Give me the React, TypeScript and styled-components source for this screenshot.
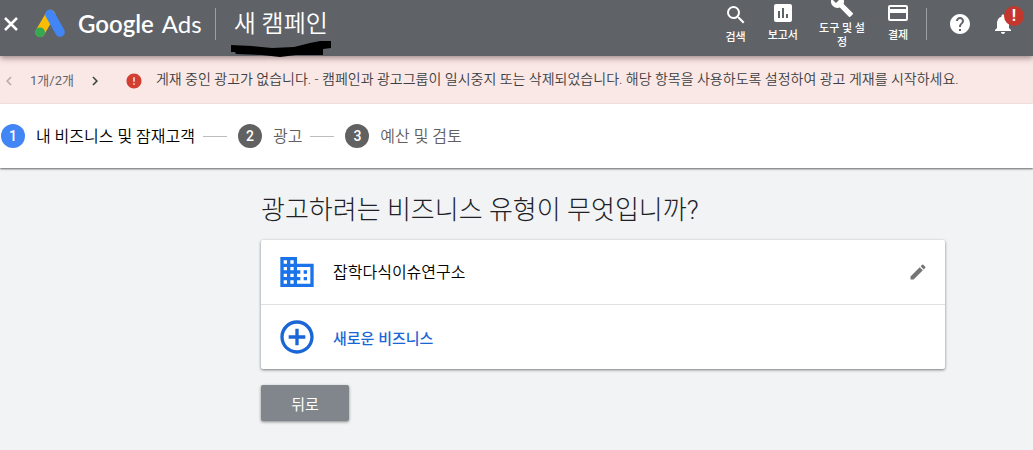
import React from "react";
import styled, { createGlobalStyle } from "styled-components";
import {
  MdAddCircleOutline,
  MdAssessment,
  MdBuild,
  MdBusiness,
  MdChevronLeft,
  MdChevronRight,
  MdEdit,
  MdError,
  MdHelp,
  MdNotifications,
  MdOutlineCreditCard,
  MdSearch,
} from "react-icons/md";

const GlobalStyle = createGlobalStyle`
  *, *::before, *::after { box-sizing: border-box; }
  body {
    margin: 0;
    background: #f1f3f4;
    color: #202124;
    font-family: Roboto, "Noto Sans CJK KR", sans-serif;
    font-size: 14px;
  }
  button {
    margin: 0;
    padding: 0;
    border: 0;
    background: none;
    color: inherit;
    font: inherit;
    cursor: pointer;
  }
  svg { display: block; flex: none; }
`;

const Header = styled.header`
  position: relative;
  z-index: 1;
  display: flex;
  align-items: center;
  height: 56px;
  padding: 0 18px 8px 0;
  background: #5f6368;
  color: #fff;
  box-shadow: 0 2px 6px rgba(60, 30, 40, 0.5);
`;

const IconButton = styled.button`
  position: relative;
  display: flex;
  flex: none;
`;

const Brand = styled.a`
  display: flex;
  align-items: center;
  gap: 12px;
  margin: 0 13px 0 12px;
  color: #fff;
  text-decoration: none;
`;

const Wordmark = styled.span`
  display: flex;
  gap: 8px;
  font-family: Lato, sans-serif;
  font-size: 24px;
  line-height: 32px;
  white-space: nowrap;

  strong { font-weight: 600; }
`;

const HeaderDivider = styled.span`
  flex: none;
  width: 1px;
  height: 32px;
  background: #9aa0a6;
`;

const PageTitle = styled.h1`
  position: relative;
  margin: 0 auto 0 18px;
  font-size: 24px;
  font-weight: 350;
  line-height: 32px;
  white-space: nowrap;
`;

const Scribble = styled.svg`
  position: absolute;
  top: 32px;
  left: -4px;
`;

const Tools = styled.nav`
  display: flex;
  align-self: flex-start;
  align-items: center;
  height: 44px;
  margin-right: 6px;
`;

const ToolButton = styled.button`
  display: flex;
  flex: none;
  flex-direction: column;
  align-items: center;
  gap: 4px;
  max-width: 68px;
  padding: 0 10px;
  font-size: 11px;
  font-weight: 500;
  line-height: 14px;
`;

const Actions = styled.div`
  display: flex;
  gap: 19px;
  margin-left: 21px;
`;

const Badge = styled.span`
  position: absolute;
  top: -6px;
  right: -9px;
  width: 20px;
  height: 20px;
  border-radius: 50%;
  background: #c5372c;
  font-size: 16px;
  font-weight: 700;
  line-height: 20px;
  text-align: center;
`;

const Banner = styled.section`
  display: flex;
  align-items: center;
  min-height: 48px;
  padding-top: 1px;
  background: #fae8e6;
  color: #3c4043;
  line-height: 20px;
`;

const Pager = styled.div`
  display: flex;
  flex: none;
  align-items: center;
  gap: 12px;
  color: #5f6368;
  font-size: 13px;
`;

const PagerButton = styled.button`
  display: flex;
  color: #3c4043;
  &:disabled { color: #b5a9a9; }
`;

const BannerText = styled.p`
  margin: 0 0 4px 13px;
  font-weight: 350;
`;

const ErrorIcon = styled(MdError)`
  margin-left: 21px;
  color: #d23f31;
`;

const Stepper = styled.ol`
  display: flex;
  align-items: center;
  height: 64px;
  margin: 0;
  padding: 0 1px;
  background: #fff;
  box-shadow: 0 1px 2px rgba(0, 0, 0, 0.6);
  list-style: none;
`;

const Step = styled.li<{ $active?: boolean }>`
  display: flex;
  align-items: center;
  gap: 11px;
  color: ${(p) => (p.$active ? "#000" : "#616161")};
  font-size: 16px;
  font-weight: 350;
  line-height: 24px;
  white-space: nowrap;

  &:not(:first-child)::before {
    content: "";
    width: 24px;
    height: 1px;
    margin-left: 8px;
    background: #bdbdbd;
  }
`;

const StepLabel = styled.span`
  padding-top: 2px;
`;

const StepNumber = styled.span<{ $active?: boolean }>`
  width: 24px;
  height: 24px;
  border-radius: 50%;
  background: ${(p) => (p.$active ? "#4285f4" : "#616161")};
  color: #fff;
  font-size: 14px;
  font-weight: 500;
  text-align: center;
`;

const Main = styled.main`
  padding: 22px 88px 28px 261px;
`;

const Question = styled.h2`
  margin: 0 0 10px;
  font-size: 26px;
  font-weight: 300;
  line-height: 40px;
`;

const Card = styled.div`
  border-radius: 2px;
  background: #fff;
  box-shadow: 0 1px 3px rgba(0, 0, 0, 0.5);
`;

const Row = styled.div`
  display: flex;
  align-items: center;
  min-height: 64px;
  padding: 0 17px 0 16px;
  color: #000;
  font-size: 16px;

  & > svg { color: #1a73e8; }
  & + & { border-top: 1px solid #e0e0e0; min-height: 65px; }
`;

const BusinessName = styled.span`
  flex: 1;
  margin-left: 16px;
  padding-bottom: 2px;
  font-weight: 350;
`;

const EditButton = styled(IconButton)`
  color: #757575;
`;

const NewBusiness = styled.button`
  display: flex;
  align-items: center;
  gap: 16px;
  color: #1a66d6;
  font-size: 15px;
  font-weight: 500;
`;

const BackButton = styled.button`
  min-width: 88px;
  height: 36px;
  margin-top: 16px;
  border-radius: 2px;
  background: #80868b;
  box-shadow: 0 1px 3px rgba(0, 0, 0, 0.45);
  color: #fff;
  font-size: 15px;
`;

const CloseIcon = () => (
  <svg width="22" height="22" viewBox="0 0 22 22" aria-hidden="true">
    <path d="M5 5 17 17M17 5 5 17" stroke="currentColor" strokeWidth="2.5" />
  </svg>
);

const AdsLogo = () => (
  <svg width="32" height="30" viewBox="0 0 32 30" aria-hidden="true">
    <path d="M16.5 5.5 6 23.3" stroke="#fbbc04" strokeWidth="9.4" strokeLinecap="round" />
    <circle cx="6" cy="23.3" r="4.9" fill="#34a853" />
    <path d="M16 5.4 26 23" stroke="#4285f4" strokeWidth="9.6" strokeLinecap="round" />
  </svg>
);

const tools = [
  { label: "보고서", Icon: MdAssessment },
  { label: "도구 및 설정", Icon: MdBuild },
  { label: "결제", Icon: MdOutlineCreditCard },
];

const steps = ["내 비즈니스 및 잠재고객", "광고", "예산 및 검토"];

export default function App() {
  return (
    <>
      <GlobalStyle />
      <Header>
        <IconButton aria-label="닫기">
          <CloseIcon />
        </IconButton>
        <Brand href="#">
          <AdsLogo />
          <Wordmark>
            <strong>Google</strong>
            <span>Ads</span>
          </Wordmark>
        </Brand>
        <HeaderDivider />
        <PageTitle>
          새 캠페인
          <Scribble width="104" height="18" viewBox="0 0 104 18" aria-hidden="true">
            <path d="M1 5 22 6 42 8 64 7 80 3 90 1 101 1 101 8 93 9 93 15 66 15 50 17 32 15 6 14 5 12 1 12Z" fill="#000" />
          </Scribble>
        </PageTitle>
        <ToolButton>
          <MdSearch size={24} />
          검색
        </ToolButton>
        <Tools>
          {tools.map(({ label, Icon }) => (
            <ToolButton key={label}>
              <Icon size={24} />
              {label}
            </ToolButton>
          ))}
        </Tools>
        <HeaderDivider />
        <Actions>
          <IconButton aria-label="도움말">
            <MdHelp size={24} />
          </IconButton>
          <IconButton aria-label="알림">
            <MdNotifications size={24} />
            <Badge>!</Badge>
          </IconButton>
        </Actions>
      </Header>

      <Banner>
        <Pager>
          <PagerButton disabled aria-label="이전">
            <MdChevronLeft size={18} />
          </PagerButton>
          <span>1개/2개</span>
          <PagerButton aria-label="다음">
            <MdChevronRight size={18} />
          </PagerButton>
        </Pager>
        <ErrorIcon size={18} />
        <BannerText>
          게재 중인 광고가 없습니다. - 캠페인과 광고그룹이 일시중지 또는 삭제되었습니다. 해당 항목을 사용하도록 설정하여 광고 게재를 시작하세요.
        </BannerText>
      </Banner>

      <Stepper>
        {steps.map((label, i) => (
          <Step key={label} $active={i === 0}>
            <StepNumber $active={i === 0}>{i + 1}</StepNumber>
            <StepLabel>{label}</StepLabel>
          </Step>
        ))}
      </Stepper>

      <Main>
        <Question>광고하려는 비즈니스 유형이 무엇입니까?</Question>
        <Card>
          <Row>
            <MdBusiness size={40} />
            <BusinessName>잡학다식이슈연구소</BusinessName>
            <EditButton aria-label="수정">
              <MdEdit size={20} />
            </EditButton>
          </Row>
          <Row>
            <NewBusiness>
              <MdAddCircleOutline size={40} />
              새로운 비즈니스
            </NewBusiness>
          </Row>
        </Card>
        <BackButton>뒤로</BackButton>
      </Main>
    </>
  );
}
